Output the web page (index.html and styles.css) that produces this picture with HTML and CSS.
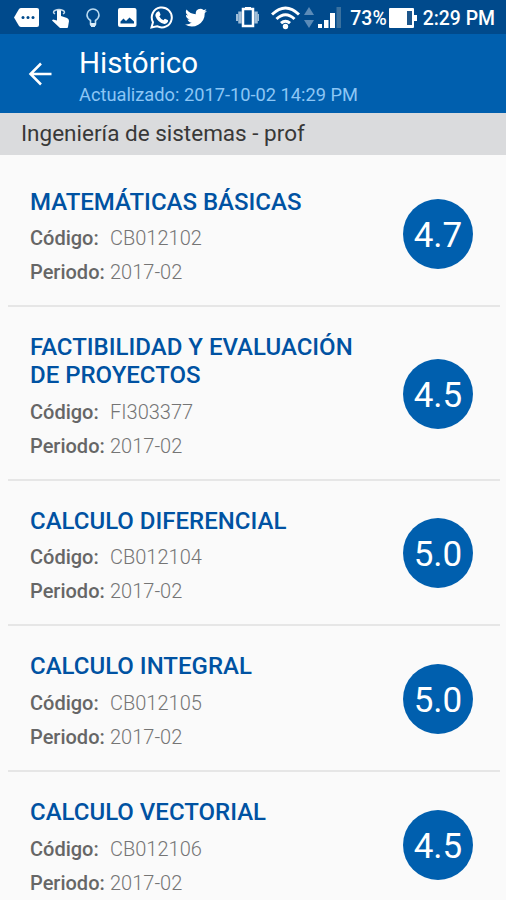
FILE: index.html
```
<!DOCTYPE html>
<html lang="es">
<head>
    <meta charset="UTF-8">
    <title>Histórico</title>
    <link rel="stylesheet" href="styles.css">
</head>
<body>
<div class="status-bar">
    <div class="notifications">
        <svg width="25" height="20" viewBox="0 0 25 20"><path fill="#fff" d="M7 0h16q2 0 2 2v15q0 2-2 2H7q-1 0-2-1L0 9.500l5-8.500q1-1 2-1z"/><g fill="#004a8c"><circle cx="9" cy="9.500" r="1.500"/><circle cx="14" cy="9.500" r="1.500"/><circle cx="19" cy="9.500" r="1.500"/></g></svg>
        <svg width="18" height="20" viewBox="0 0 18 20"><path fill="#fff" d="M5 2q2-2 4 0v6l6 2q2 1 2 3l-1 6q0 1-1 1H8L0 12.500l1-1 4 1z"/><path fill="none" stroke="#c5d9e9" stroke-width="1.500" d="M3 6q-3-2 0-3.500 4-2 8 0 3 1.500 0 3.500"/></svg>
        <svg width="14" height="20" viewBox="0 0 14 20"><path fill="none" stroke="#b9daf0" stroke-width="1.600" d="M4.500 16v-3.500Q1 10 1 7a6 6 0 0 1 12 0q0 3-3.500 5.500V16z"/><path fill="#d8ebf7" d="M4 15h6v2q0 1-1 1v1H5v-1q-1 0-1-1z"/></svg>
        <svg width="19" height="20" viewBox="0 0 19 20"><rect width="18.500" height="19" rx="2" fill="#fff"/><path fill="#004a8c" d="M2.500 15.500v-2l3-3 2.500 2.500 3.500-3.500 4.500 4v2z"/></svg>
        <svg width="23" height="23" viewBox="0 0 23 23"><path fill="none" stroke="#fff" stroke-width="2" d="M1.500 21.500L3 16.200a10 10 0 1 1 4 4z"/><path fill="#fff" d="M8 5.500q1-.5 1.500.5l1 2.400q.2.600-1.200 2.100 1.500 2.700 4.200 3.800 1.300-1.700 1.900-1.400l2.400 1.200q.6.400 0 2-1 2-3.400 1.800-6.700-1.200-9-7.900-.3-3 2.600-4.500z"/></svg>
        <svg width="22" height="19" viewBox="0 2 24 20"><path fill="#fff" d="M24 4.600a10 10 0 0 1-2.800.8 5 5 0 0 0 2.100-2.700 10 10 0 0 1-3.100 1.200A5 5 0 0 0 11.800 8.400 14 14 0 0 1 1.700 3.200a5 5 0 0 0 1.500 6.500 5 5 0 0 1-2.200-.6 5 5 0 0 0 4 4.900 5 5 0 0 1-2.300.1 5 5 0 0 0 4.600 3.400A10 10 0 0 1 0 19.500 14 14 0 0 0 21.500 7.100 10 10 0 0 0 24 4.600z"/></svg>
    </div>
    <div class="system">
        <svg width="23" height="21" viewBox="0 0 23 21"><rect x="7" y="2" width="10" height="17" fill="none" stroke="#fff" stroke-width="2.500"/><path fill="#fff" d="M9 0h6v3H9z"/><path stroke="#9fbdd8" stroke-width="3.500" d="M4 4.500v12M20 4.500v12"/><path stroke="#9fbdd8" stroke-width="2" d="M1 7v7M22.500 7v7"/></svg>
        <svg width="29" height="24" viewBox="0 0 29 24"><g fill="none" stroke="#fff" stroke-width="3"><path d="M1 8.500q13.500-13 27 0"/><path d="M5.500 13q9-8.500 18 0"/><path d="M10 17.200q4.500-4 9 0"/></g><circle cx="14.500" cy="20.500" r="2.700" fill="#fff"/></svg>
        <svg width="10" height="21" viewBox="0 0 10 21"><path fill="#5b8bb8" d="M5 0l5 8H0zM0 13h10l-5 8z"/></svg>
        <svg width="23" height="21" viewBox="0 0 23 21"><path fill="#fff" d="M0 17h4v4H0zM6 13h4.500v8H6zM12 6h5v15h-5z"/><path fill="#3a719f" d="M18.500 0H23v21h-4.500z"/></svg>
        <span class="percent">73%</span>
        <svg width="28" height="20" viewBox="0 0 28 20"><rect width="25" height="20" rx="1" fill="#fff"/><path fill="#1d568b" d="M18 3h5v14h-5z"/><path fill="#fff" d="M25 7h3v6h-3z"/></svg>
        <span class="clock">2:29 PM</span>
    </div>
</div>

<div class="toolbar">
    <svg class="back" width="24" height="24" viewBox="0 0 24 24"><path fill="none" stroke="#fff" stroke-width="2.500" d="M23.500 12H2.500M13 1.500L2.500 12 13 22.500"/></svg>
    <div>
        <h1>Histórico</h1>
        <p class="updated">Actualizado: 2017-10-02 14:29 PM</p>
    </div>
</div>

<h2 class="program">Ingeniería de sistemas - prof</h2>

<ul class="subjects">
    <li class="subject">
        <div class="info">
            <h3>MATEMÁTICAS BÁSICAS</h3>
            <p><b>Código:</b><span>CB012102</span></p>
            <p><b>Periodo:</b><span>2017-02</span></p>
        </div>
        <div class="grade">4.7</div>
    </li>
    <li class="subject">
        <div class="info">
            <h3>FACTIBILIDAD Y EVALUACIÓN DE PROYECTOS</h3>
            <p><b>Código:</b><span>FI303377</span></p>
            <p><b>Periodo:</b><span>2017-02</span></p>
        </div>
        <div class="grade">4.5</div>
    </li>
    <li class="subject">
        <div class="info">
            <h3>CALCULO DIFERENCIAL</h3>
            <p><b>Código:</b><span>CB012104</span></p>
            <p><b>Periodo:</b><span>2017-02</span></p>
        </div>
        <div class="grade">5.0</div>
    </li>
    <li class="subject">
        <div class="info">
            <h3>CALCULO INTEGRAL</h3>
            <p><b>Código:</b><span>CB012105</span></p>
            <p><b>Periodo:</b><span>2017-02</span></p>
        </div>
        <div class="grade">5.0</div>
    </li>
    <li class="subject">
        <div class="info">
            <h3>CALCULO VECTORIAL</h3>
            <p><b>Código:</b><span>CB012106</span></p>
            <p><b>Periodo:</b><span>2017-02</span></p>
        </div>
        <div class="grade">4.5</div>
    </li>
</ul>
</body>
</html>
```
FILE: styles.css
```
* {
    box-sizing: border-box;
    margin: 0;
    padding: 0;
}

body {
    height: 900px;
    overflow: hidden;
    background: #fafafa;
    font-family: Roboto, sans-serif;
}

svg {
    flex: none;
    display: block;
}

/* status bar */
.status-bar {
    display: flex;
    justify-content: space-between;
    height: 34px;
    padding: 0 11px 0 14px;
    background: #004a8c;
    color: #fff;
}

.notifications,
.system {
    display: flex;
    align-items: center;
}

.notifications {
    gap: 13px;
}

.notifications svg {
    margin-top: 1px;
}

.notifications svg:nth-child(3) {
    margin-left: 3px;
}

.notifications svg:nth-child(4) {
    margin-left: 5px;
}

.notifications svg:nth-child(6) {
    margin-left: -1px;
}

.system {
    gap: 4px;
}

.system svg {
    margin-top: 1px;
}

.system svg:first-child {
    margin-right: 8px;
}

.percent,
.clock {
    padding-top: 3px;
    font-size: 19.400px;
    font-weight: 500;
    line-height: 30px;
    white-space: nowrap;
}

.percent {
    margin-left: 5px;
    margin-right: -2px;
}

.clock {
    margin-left: 2px;
}

/* toolbar */
.toolbar {
    display: flex;
    height: 79px;
    padding: 12px 28px 0;
    background: #005fae;
    color: #fff;
}

.back {
    margin-top: 16px;
    margin-right: 27px;
}

h1 {
    font-size: 29.500px;
    font-weight: 400;
    line-height: 35px;
}

.updated {
    color: #8cc6f5;
    font-size: 18.250px;
    line-height: 27px;
}

.program {
    height: 42px;
    padding-left: 21px;
    background: #dadbdd;
    color: #383838;
    font-size: 22.500px;
    font-weight: 400;
    line-height: 41px;
}

/* subject list */
.subjects {
    padding: 6.500px 6px 0 8px;
    list-style: none;
}

.subject {
    display: flex;
    align-items: center;
    justify-content: space-between;
    padding: 27px 27px 16px 22px;
    border-bottom: 2px solid #e6e6e6;
}

.info {
    width: 335px;
}

h3 {
    margin-bottom: 5px;
    color: #0052a2;
    font-size: 24px;
    font-weight: 500;
    line-height: 27.700px;
}

.info p {
    display: flex;
    color: #757575;
    font-size: 20px;
    font-weight: 300;
    line-height: 34px;
}

.info b {
    width: 80px;
    color: #666;
    font-weight: 500;
}

.grade {
    width: 70px;
    height: 70px;
    margin-bottom: 9px;
    border-radius: 50%;
    background: #005fae;
    color: #fff;
    font-size: 35px;
    line-height: 73px;
    text-align: center;
}
```
